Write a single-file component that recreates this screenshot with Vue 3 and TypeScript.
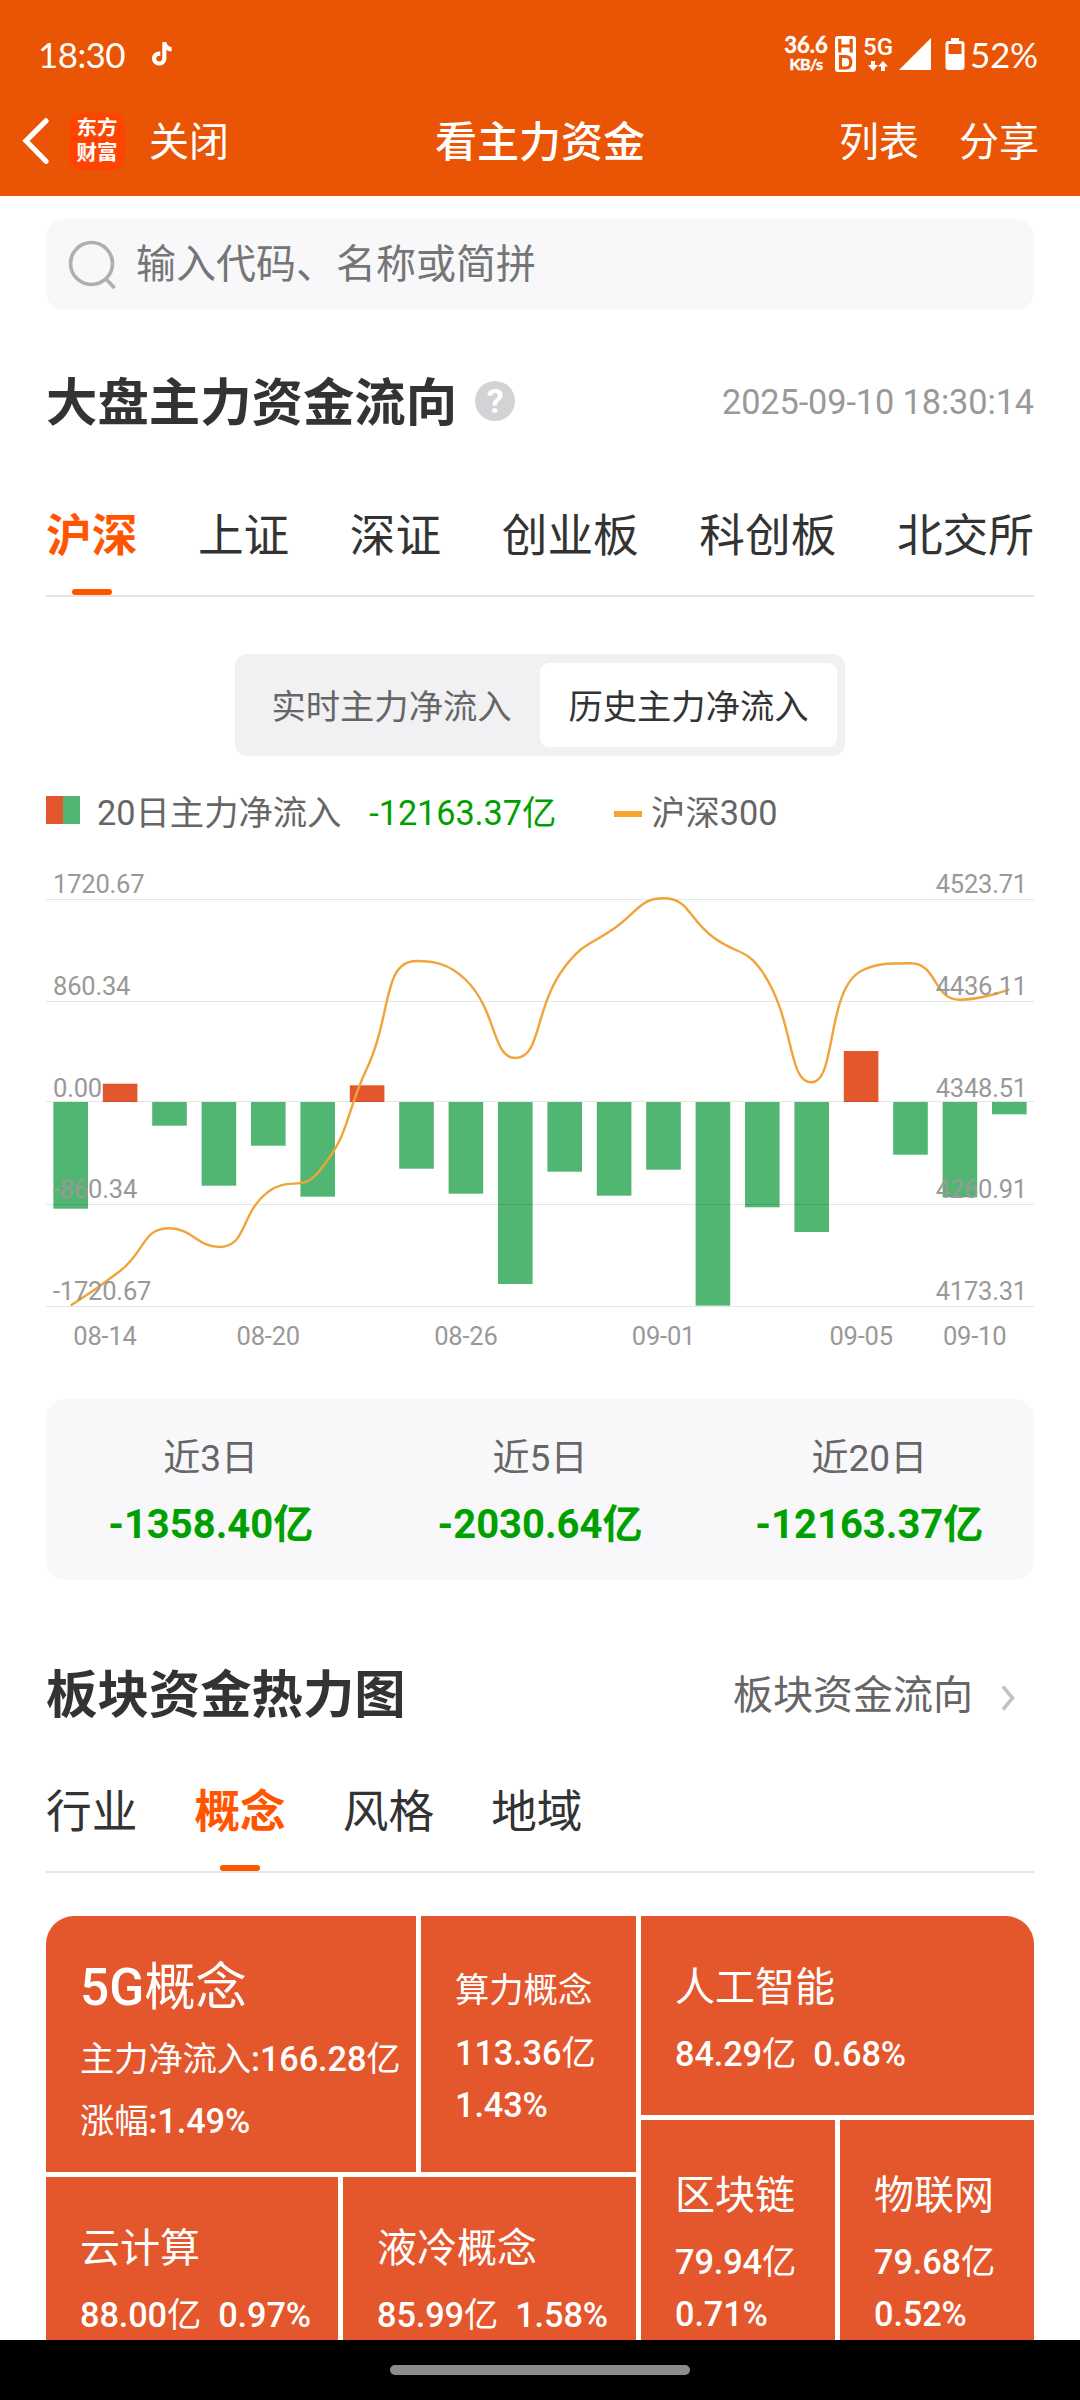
<script setup lang="ts">
import { h, type FunctionalComponent } from 'vue'

interface Tile {
  name: string
  lines: string[]
  cls: string
}

const marketTabs = ['沪深', '上证', '深证', '创业板', '科创板', '北交所']
const boardTabs = ['行业', '概念', '风格', '地域']

const summary = [
  { label: '近3日', value: '-1358.40亿' },
  { label: '近5日', value: '-2030.64亿' },
  { label: '近20日', value: '-12163.37亿' },
]

const tiles: Record<string, Tile> = {
  g5: { name: '5G概念', lines: ['主力净流入:166.28亿', '涨幅:1.49%'], cls: 'hero' },
  power: { name: '算力概念', lines: ['113.36亿', '1.43%'], cls: 'small' },
  ai: { name: '人工智能', lines: ['84.29亿', '0.68%'], cls: 'inline' },
  cloud: { name: '云计算', lines: ['88.00亿', '0.97%'], cls: 'inline cloud' },
  cooling: { name: '液冷概念', lines: ['85.99亿', '1.58%'], cls: 'inline' },
  chain: { name: '区块链', lines: ['79.94亿', '0.71%'], cls: 'stack' },
  iot: { name: '物联网', lines: ['79.68亿', '0.52%'], cls: 'stack' },
}
const topLeft = [tiles.g5, tiles.power]
const bottomLeft = [tiles.cloud, tiles.cooling]
const bottomRight = [tiles.chain, tiles.iot]

// Sets Latin letters and digits in medium weight, Chinese in regular
const Mixed: FunctionalComponent<{ text: string }> = (props) =>
  h(
    'span',
    (props.text.match(/[\x20-\x7e]+|[^\x20-\x7e]+/g) ?? []).map((part) =>
      /^[\x20-\x7e]/.test(part) ? h('b', { style: { fontWeight: 500 } }, part) : part,
    ),
  )
Mixed.props = ['text']

// Chart geometry: 20 slots over 988 units, zero axis at y = 242
const step = 49.4
const zero = 242
const barWidth = 34.6
const slot = (i: number): number => step * (i + 0.5)

const barEnds = [
  348.7, 223.7, 265.7, 325.7, 285.7, 336.7, 225.3, 308.7, 333.7, 424,
  311.7, 335.7, 309.7, 445.6, 347.3, 372, 191, 294.7, 337.3, 254.3,
]
const bars = barEnds.map((end, i) => ({
  x: slot(i) - barWidth / 2,
  y: Math.min(end, zero),
  h: Math.abs(end - zero),
  color: end < zero ? '#e4572d' : '#51b671',
}))

const indexLine = [
  445.5, 411, 368.3, 387, 331.7, 313, 208, 101, 120, 198,
  107, 68.5, 38.3, 77, 111.7, 222.3, 111, 103.3, 139.7, 129.3,
]

const clamp = (v: number, a: number, b: number): number =>
  Math.max(Math.min(v, Math.max(a, b)), Math.min(a, b))

// Smooth curve whose control points never leave the box of their segment
function smoothPath(values: number[]): string {
  const pts = values.map((y, i) => ({ x: slot(i), y }))
  let c0 = { ...pts[0] }
  let d = `M${pts[0].x} ${pts[0].y}`
  for (let i = 1; i < pts.length; i++) {
    const prev = pts[i - 1]
    const p = pts[i]
    const next = pts[i + 1]
    let c1 = { ...p }
    let nextC0 = { ...p }
    if (next) {
      const lenPrev = Math.hypot(p.x - prev.x, p.y - prev.y)
      const lenNext = Math.hypot(next.x - p.x, next.y - p.y)
      const ratio = lenNext / (lenNext + lenPrev)
      const vx = next.x - prev.x
      const vy = next.y - prev.y
      nextC0 = {
        x: clamp(p.x + vx * 0.5 * ratio, next.x, p.x),
        y: clamp(p.y + vy * 0.5 * ratio, next.y, p.y),
      }
      c1 = {
        x: clamp(p.x - ((nextC0.x - p.x) * lenPrev) / lenNext, prev.x, p.x),
        y: clamp(p.y - ((nextC0.y - p.y) * lenPrev) / lenNext, prev.y, p.y),
      }
      nextC0 = {
        x: p.x + ((p.x - c1.x) * lenNext) / lenPrev,
        y: p.y + ((p.y - c1.y) * lenNext) / lenPrev,
      }
    }
    d += `C${c0.x} ${c0.y} ${c1.x} ${c1.y} ${p.x} ${p.y}`
    c0 = nextC0
  }
  return d
}
const linePath = smoothPath(indexLine)

const rows = [
  { line: 39.5, text: 33, left: '1720.67', right: '4523.71' },
  { line: 141.5, text: 135, left: '860.34', right: '4436.11' },
  { line: 241.5, text: 237, left: '0.00', right: '4348.51' },
  { line: 344.5, text: 338.3, left: '-860.34', right: '4260.91' },
  { line: 446.5, text: 440, left: '-1720.67', right: '4173.31' },
]
const dates = [
  { x: 59, label: '08-14' },
  { x: slot(4), label: '08-20' },
  { x: slot(8), label: '08-26' },
  { x: slot(12), label: '09-01' },
  { x: slot(16), label: '09-05' },
  { x: 928.6, label: '09-10' },
]
</script>

<template>
  <div class="screen">
    <header class="top">
      <div class="status">
        <span class="clock">18:30</span>
        <svg class="note" width="20" height="24" viewBox="0 0 20 24">
          <path d="M10.3 0h4.1c.3 2.900 2.200 4.800 5.200 5.100v4.300c-2-.1-3.700-.7-5.200-1.700v8.200c0 4.600-3.200 7.700-7.200 7.700S0 20.400 0 16.600c0-4.300 3.500-7.500 8.300-7.100v4.200c-2.400-.4-4.100.9-4.100 2.900 0 1.800 1.300 3 3 3 1.900 0 3.100-1.300 3.100-3.500z" fill="#fff" />
        </svg>
        <div class="speed"><b>36.6</b><i>KB/s</i></div>
        <svg class="hd" width="21" height="36" viewBox="0 0 21 36">
          <rect width="21" height="36" rx="3" fill="#fff" />
          <path d="M4.800 3v13.500M16.200 3v13.500M4.800 10h11.400" stroke="#e95504" stroke-width="3.200" fill="none" />
          <path d="M5.500 20.500h5q5.300 0 5.300 5.800t-5.300 5.700h-5z" stroke="#e95504" stroke-width="3.200" fill="none" />
        </svg>
        <div class="net">
          <b>5G</b>
          <svg width="20" height="10" viewBox="0 0 20 10">
            <path d="M3 0h4v4h3L5 10 0 4h3zM13 10h4V5.500h3L15 0l-5 5.500h3z" fill="#fff" />
          </svg>
        </div>
        <svg class="signal" width="33" height="33" viewBox="0 0 33 33"><path d="M32 0v32H0z" fill="#fff" /></svg>
        <svg class="battery" width="20" height="32" viewBox="0 0 20 32">
          <path d="M6 0h8v3h2.500Q19.500 3 19.500 6v23q0 3-3 3h-13q-3 0-3-3V6q0-3 3-3H6z" fill="#fff" />
          <rect x="3.500" y="6" width="13" height="10" fill="#e95504" />
        </svg>
        <span class="percent">52%</span>
      </div>
      <nav class="nav">
        <div class="side">
          <svg class="back" width="28" height="46" viewBox="0 0 28 46">
            <path d="M24 2.800 4 22.800l20 20.500" fill="none" stroke="#fff" stroke-width="5.200" stroke-linecap="round" stroke-linejoin="miter" />
          </svg>
          <div class="logo"><span>东方</span><span>财富</span></div>
          <span class="action">关闭</span>
        </div>
        <h1>看主力资金</h1>
        <div class="side end"><span class="action">列表</span><span class="action">分享</span></div>
      </nav>
    </header>

    <main class="content">
      <div class="search">
        <svg width="50" height="50" viewBox="0 0 50 50">
          <circle cx="24.500" cy="23.500" r="21" fill="none" stroke="#afafaf" stroke-width="3.600" />
          <path d="m39 39 8.500 9" stroke="#afafaf" stroke-width="3.600" />
        </svg>
        <span>输入代码、名称或简拼</span>
      </div>

      <div class="heading first">
        <h2>大盘主力资金流向</h2>
        <span class="help">?</span>
        <time>2025-09-10 18:30:14</time>
      </div>

      <div class="tabs spread">
        <span v-for="(t, i) in marketTabs" :key="t" class="tab" :class="{ active: i === 0 }">{{ t }}</span>
      </div>

      <div class="segment">
        <span>实时主力净流入</span>
        <span class="on">历史主力净流入</span>
      </div>

      <div class="legend">
        <i class="swatch"></i>
        <span>20日主力净流入</span>
        <span class="total">-12163.37亿</span>
        <i class="dash"></i>
        <span>沪深300</span>
      </div>

      <svg class="chart" width="988" height="500" viewBox="0 0 988 500">
        <rect v-for="(b, i) in bars" :key="i" :x="b.x" :y="b.y" :width="barWidth" :height="b.h" :fill="b.color" />
        <line v-for="r in rows" :key="r.line" x1="0" x2="988" :y1="r.line" :y2="r.line" class="grid" />
        <path :d="linePath" class="index" />
        <g class="axis">
          <text v-for="r in rows" :key="r.left" x="7" :y="r.text">{{ r.left }}</text>
          <text v-for="r in rows" :key="r.right" x="981" :y="r.text" text-anchor="end">{{ r.right }}</text>
          <text v-for="d in dates" :key="d.label" :x="d.x" y="485" text-anchor="middle">{{ d.label }}</text>
        </g>
      </svg>

      <div class="summary">
        <div v-for="s in summary" :key="s.label" class="sum">
          <span>{{ s.label }}</span>
          <strong>{{ s.value }}</strong>
        </div>
      </div>

      <div class="heading second">
        <h2>板块资金热力图</h2>
        <span class="more">板块资金流向</span>
        <svg width="16" height="28" viewBox="0 0 16 28">
          <path d="m3 2.500 9.500 11.500L3 25.500" fill="none" stroke="#c4c4c4" stroke-width="3.600" />
        </svg>
      </div>

      <div class="tabs packed">
        <span v-for="(t, i) in boardTabs" :key="t" class="tab" :class="{ active: i === 1 }">{{ t }}</span>
      </div>

      <div class="heat">
        <div class="left">
          <div class="row upper">
            <div v-for="t in topLeft" :key="t.name" class="tile" :class="t.cls">
              <h3><Mixed :text="t.name" /></h3>
              <div class="vals"><Mixed v-for="l in t.lines" :key="l" :text="l" /></div>
            </div>
          </div>
          <div class="row lower">
            <div v-for="t in bottomLeft" :key="t.name" class="tile" :class="t.cls">
              <h3><Mixed :text="t.name" /></h3>
              <div class="vals"><Mixed v-for="l in t.lines" :key="l" :text="l" /></div>
            </div>
          </div>
        </div>
        <div class="right">
          <div class="tile inline ai">
            <h3><Mixed :text="tiles.ai.name" /></h3>
            <div class="vals"><Mixed v-for="l in tiles.ai.lines" :key="l" :text="l" /></div>
          </div>
          <div class="row lower">
            <div v-for="t in bottomRight" :key="t.name" class="tile" :class="t.cls">
              <h3><Mixed :text="t.name" /></h3>
              <div class="vals"><Mixed v-for="l in t.lines" :key="l" :text="l" /></div>
            </div>
          </div>
        </div>
      </div>
    </main>

    <footer class="home"><i></i></footer>
  </div>
</template>

<style>
body {
  background: #fff;
}
</style>

<style scoped>
* {
  box-sizing: border-box;
}
.screen {
  width: 1080px;
  height: 2400px;
  overflow: hidden;
  display: flex;
  flex-direction: column;
  background: #fff;
  color: #333;
  font-family: Roboto, "Noto Sans CJK SC", sans-serif;
  font-size: 34.3px;
  white-space: nowrap;
}
h1, h2, h3 {
  margin: 0;
}
.top {
  flex: none;
  height: 196px;
  background: #e95504;
  color: #fff;
}
.status {
  height: 86px;
  padding: 22px 42px 0 38px;
  display: flex;
  align-items: center;
  font-family: Lato, Roboto, sans-serif;
}
.clock {
  width: 114px;
  font-size: 35px;
  line-height: 42px;
  margin-top: -1px;
  letter-spacing: -0.6px;
}
.note {
  margin-right: auto;
}
.speed {
  width: 44px;
  margin: -3px 7px 0 0;
  display: flex;
  flex-direction: column;
  align-items: center;
}
.speed b {
  font-size: 22px;
  line-height: 21px;
  -webkit-text-stroke: 0.4px #fff;
}
.speed i {
  font-size: 16px;
  line-height: 17px;
  font-style: normal;
  font-weight: 700;
  letter-spacing: -0.6px;
  -webkit-text-stroke: 0.5px #fff;
}
.hd {
  margin-right: 7px;
}
.net {
  width: 30px;
  display: flex;
  flex-direction: column;
  align-items: center;
  margin: -3px 6px 0 0;
}
.net svg {
  margin-top: 2px;
}
.net b {
  font: 500 24px/24px Roboto, sans-serif;
}
.signal {
  margin-right: 13px;
}
.battery {
  margin-right: 5px;
}
.percent {
  width: 68px;
  font-size: 35px;
  line-height: 42px;
  margin-top: -1px;
  letter-spacing: -0.3px;
}
.nav {
  height: 110px;
  padding-top: 3px;
  display: grid;
  grid-template-columns: 1fr auto 1fr;
  align-items: center;
}
.side {
  display: flex;
  align-items: center;
  padding-left: 22px;
}
.back,
.logo {
  position: relative;
  top: -1.5px;
}
.end {
  justify-content: flex-end;
  gap: 40px;
  padding: 0 41px 0 0;
}
.logo {
  width: 56px;
  height: 57px;
  margin: 0 24px 0 19px;
  border-radius: 12px;
  background: #ff4400;
  display: flex;
  flex-direction: column;
  align-items: center;
  justify-content: center;
  padding-bottom: 1px;
  font-size: 20.5px;
  font-weight: 700;
  line-height: 25px;
}
.action {
  font-size: 40px;
  line-height: 60px;
}
.nav h1 {
  font-size: 42px;
  font-weight: 500;
  line-height: 60px;
}
.content {
  flex: 1;
  min-height: 0;
  padding: 23px 46px 0;
  overflow: hidden;
}
.search {
  height: 91px;
  padding-left: 21px;
  display: flex;
  align-items: center;
  border-radius: 18px;
  background: #f8f8fa;
  color: #757575;
  font-size: 40px;
}
.search span {
  margin-left: 19px;
  line-height: 60px;
}
.heading {
  display: flex;
  align-items: center;
}
.heading h2 {
  margin-top: -4px;
  font-size: 51.4px;
  font-weight: 700;
}
.first {
  height: 71px;
  margin-top: 55px;
}
.help {
  width: 40px;
  height: 40px;
  margin-left: 18px;
  border-radius: 50%;
  background: #d3d3d5;
  color: #fff;
  font-size: 34px;
  font-weight: 700;
  line-height: 41px;
  text-align: center;
}
time {
  margin: 3px 0 0 auto;
  color: #999;
  letter-spacing: -0.1px;
}
.tabs {
  height: 107px;
  display: flex;
  border-bottom: 2px solid #e5e5e5;
  font-size: 45.7px;
  line-height: 93px;
}
.spread {
  margin-top: 54px;
  justify-content: space-between;
}
.packed {
  margin-top: 39px;
  gap: 57px;
}
.tab.active {
  display: flex;
  flex-direction: column;
  align-items: center;
  color: #ff5500;
  font-weight: 700;
}
.tab.active::after {
  content: "";
  width: 40px;
  height: 6px;
  margin-top: 6px;
  border-radius: 3px;
  background: #ff5500;
}
.segment {
  width: 610px;
  height: 102px;
  margin: 57px auto 0;
  padding: 9px 8px;
  display: flex;
  border-radius: 12px;
  background: #f1f1f4;
  color: #666;
  line-height: 88px;
  text-align: center;
}
.segment span {
  flex: 1;
  border-radius: 9px;
}
.segment .on {
  background: #fff;
  color: #333;
}
.legend {
  height: 50px;
  margin-top: 29px;
  display: flex;
  align-items: center;
  color: #666;
}
.swatch {
  width: 34px;
  height: 28px;
  margin-right: 17px;
  background: linear-gradient(90deg, #e4572d 50%, #51b671 50%);
}
.total {
  margin-left: 28px;
  color: #009f00;
  letter-spacing: -0.1px;
}
.dash {
  width: 28px;
  height: 6px;
  margin: 8px 9px 0 58px;
  background: #f7a330;
}
.chart {
  display: block;
  margin-top: 25px;
}
.grid {
  stroke: rgba(0, 0, 0, 0.1);
  stroke-width: 1.2;
}
.index {
  fill: none;
  stroke: #f0a43c;
  stroke-width: 2.4;
}
.axis {
  fill: #999;
  font-size: 25.5px;
  letter-spacing: -0.2px;
}
.summary {
  height: 181px;
  margin-top: 39px;
  padding-top: 35px;
  display: flex;
  border-radius: 20px;
  background: #f8f8fa;
}
.sum {
  flex: 1;
  display: flex;
  flex-direction: column;
  align-items: center;
  gap: 16px;
  line-height: 50px;
}
.sum span {
  color: #666;
  font-size: 37.1px;
}
.sum strong {
  color: #00a000;
  font-size: 40px;
  font-weight: 700;
}
.second {
  height: 70px;
  margin-top: 77px;
}
.more {
  margin-left: auto;
  color: #666;
  font-size: 40px;
}
.second svg {
  margin: 11px 18px 0 27px;
}
.heat {
  height: 520px;
  margin-top: 43px;
  display: flex;
  gap: 5px;
  border-radius: 28px;
  overflow: hidden;
  color: #fff;
}
.left {
  width: 590px;
  display: flex;
  flex-direction: column;
  gap: 5px;
}
.right {
  width: 393px;
  display: flex;
  flex-direction: column;
  gap: 5px;
}
.row {
  display: flex;
  gap: 5px;
}
.upper {
  height: 256px;
}
.lower {
  flex: 1;
}
.tile {
  flex: 1 1 0;
  padding: 41px 0 0 34px;
  background: #e4572d;
  font-weight: 400;
}
.tile h3 {
  font-size: 40px;
  font-weight: 400;
  line-height: 62px;
}
.vals {
  margin-top: 9px;
  display: flex;
  gap: 17px;
  line-height: 52px;
  letter-spacing: -0.1px;
}
.cloud {
  flex: 0 0 292px;
}
.hero {
  flex: none;
  width: 370px;
  padding-top: 32px;
}
.hero h3 {
  font-size: 51.4px;
  line-height: 80px;
}
.hero .vals {
  margin-top: 0;
  line-height: 62px;
}
.hero .vals,
.small .vals,
.stack .vals {
  flex-direction: column;
  gap: 0;
}
.small {
  padding-top: 43px;
}
.small h3 {
  font-size: 34.3px;
}
.small .vals {
  margin-top: 6px;
}
.stack {
  padding-top: 45px;
}
.ai {
  flex: none;
  height: 199px;
}
.home {
  flex: none;
  height: 60px;
  display: flex;
  justify-content: center;
  padding-top: 25px;
  background: #000;
}
.home i {
  width: 300px;
  height: 10px;
  border-radius: 5px;
  background: #8c8c8c;
}
</style>
